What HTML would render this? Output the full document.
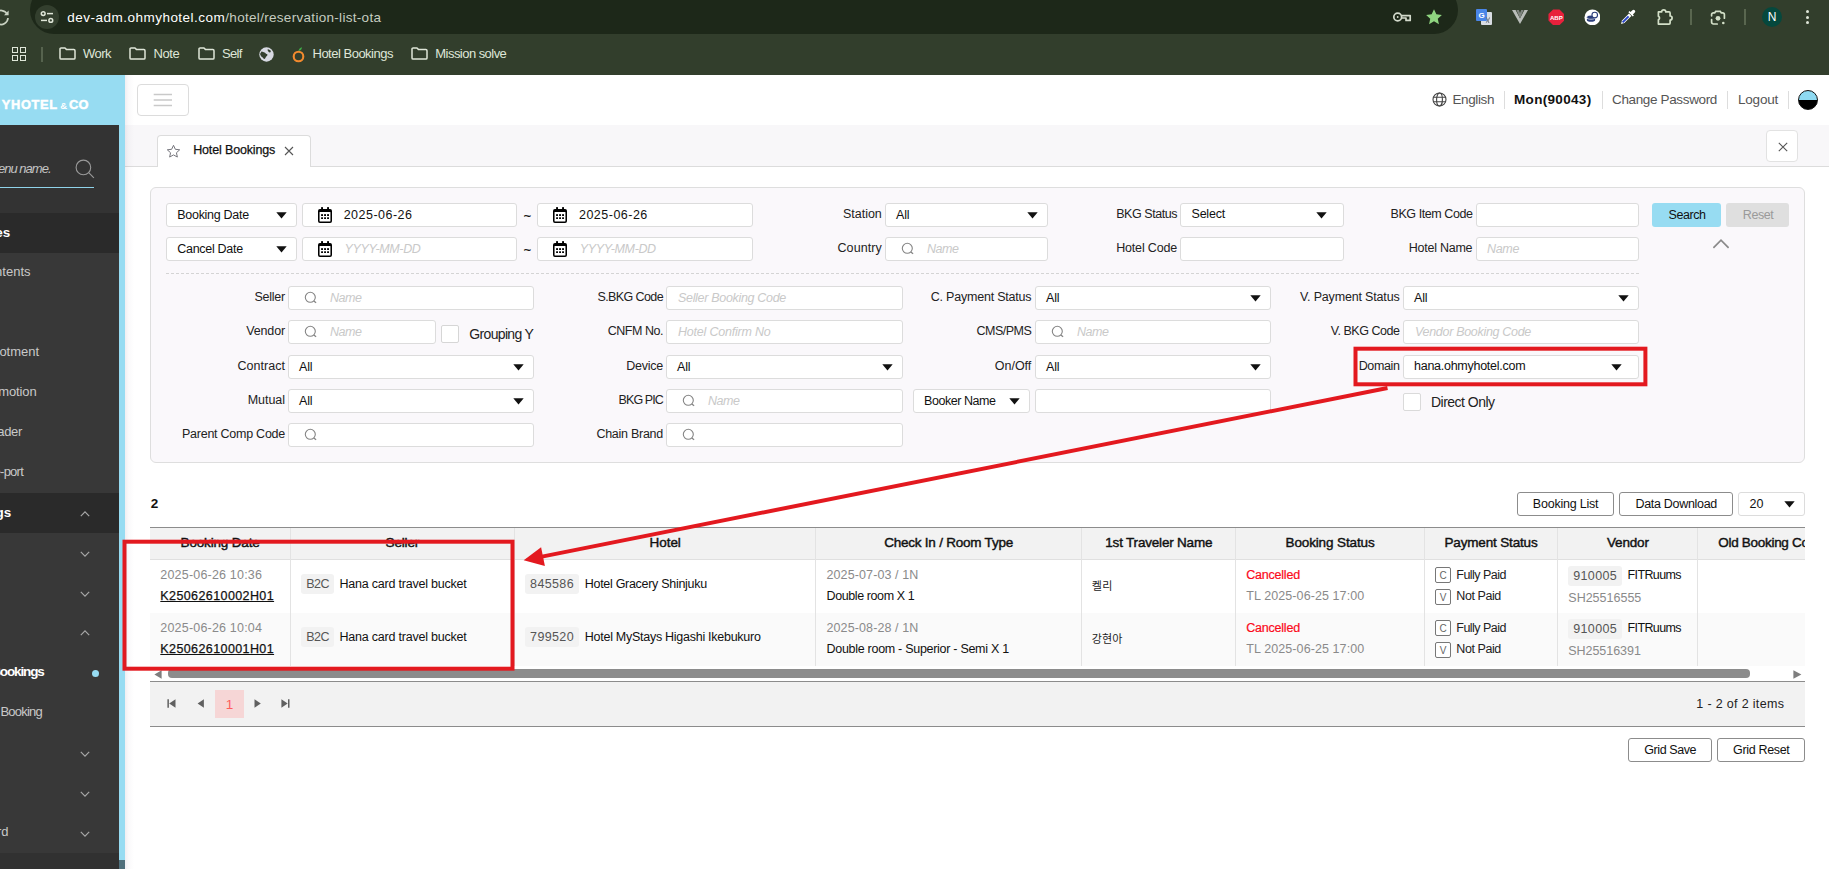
<!DOCTYPE html>
<html lang="en"><head><meta charset="utf-8"><title>Hotel Bookings</title>
<style>

html,body{margin:0;padding:0;}
body{width:1829px;height:869px;overflow:hidden;background:#fff;font-family:"Liberation Sans","Noto Sans CJK KR",sans-serif;}
#root{position:relative;width:1829px;height:869px;overflow:hidden;background:#fff;}
#root div,#root span,#root svg{position:absolute;box-sizing:border-box;white-space:pre;}
.inp{background:#fff;border:1px solid #dcdcdc;border-radius:3px;}
.btn{background:#fff;border:1px solid #8c8c8c;border-radius:3px;}

</style></head>
<body>
<div id="root">
<div style="left:0px;top:0px;width:1829px;height:75px;background:#323e2c;"></div>
<div style="left:30px;top:-14px;width:1428px;height:48px;background:#1d2819;border-radius:24px;"></div>
<svg style="left:-9px;top:8px" width="20" height="20" viewBox="0 0 20 20"><path d="M16.2 6.2A7 7 0 1 0 17 10" fill="none" stroke="#c9d2c2" stroke-width="1.7"/><path d="M17.6 2.6v4.6H13z" fill="#c9d2c2"/></svg>
<div style="left:35px;top:5px;width:24px;height:24px;background:#333f2e;border-radius:12px;"></div>
<svg style="left:39px;top:9px" width="16" height="16" viewBox="0 0 16 16" fill="none" stroke="#dfe6d8" stroke-width="1.5"><circle cx="4.2" cy="4.6" r="1.9"/><path d="M8 4.6h6"/><circle cx="11.8" cy="11.4" r="1.9"/><path d="M2 11.4h6"/></svg>
<span style="left:67.30px;top:11.00px;line-height:13.5px;font-size:13.5px;font-weight:400;color:#ffffff;letter-spacing:0.484px;">dev-adm.ohmyhotel.com</span>
<span style="left:225.30px;top:11.00px;line-height:13.5px;font-size:13.5px;font-weight:400;color:#c6cdc0;letter-spacing:0.303px;">/hotel/reservation-list-ota</span>
<svg style="left:1392px;top:7.800px" width="20" height="18" viewBox="0 0 20 18" fill="none" stroke="#d3dacc" stroke-width="1.700" stroke-linejoin="round"><circle cx="5.700" cy="9" r="3.900"/><circle cx="5.700" cy="9" r=".900" fill="#d3dacc" stroke="none"/><path d="M9.600 7.600h8.600v4.800h-4.200v-2.400h-4"/></svg>
<svg style="left:1425px;top:8px" width="18" height="18" viewBox="0 0 18 18"><path d="M9 1.2l2.35 5.1 5.55.6-4.15 3.75 1.2 5.5L9 13.3l-4.95 2.85 1.2-5.5L1.1 6.9l5.55-.6z" fill="#8fd580"/></svg>
<svg style="left:1475px;top:8px" width="18" height="18" viewBox="0 0 18 18"><rect x="6" y="4" width="11" height="13" rx="1" fill="#d9dde3"/><rect x="1" y="1" width="11" height="12" rx="1" fill="#4a86e8"/><text x="3.6" y="10" font-size="8" font-weight="700" fill="#fff" font-family="Liberation Sans,sans-serif">G</text><path d="M11 9l3 6M14.5 9.5c-.6 2.5-2 4-3.6 5" stroke="#6c7480" stroke-width="1" fill="none"/></svg>
<svg style="left:1511px;top:9px" width="18" height="16" viewBox="0 0 18 16"><path d="M1 1h3.6L9 9.5 13.4 1H17L9 15z" fill="#b9bdb9"/><path d="M5.4 1h2.4L9 4l1.2-3h2.4L9 9.5z" fill="#7f857f"/></svg>
<svg style="left:1547.700px;top:8.600px" width="16.600" height="16.600" viewBox="0 0 18 18"><path d="M5.5 .5h7l5 5v7l-5 5h-7l-5-5v-7z" fill="#e8213c"/><text x="9" y="11.6" text-anchor="middle" font-size="6.6" font-weight="700" fill="#fff" font-family="Liberation Sans,sans-serif">ABP</text></svg>
<svg style="left:1583.600px;top:8.600px" width="16.800" height="16.800" viewBox="0 0 18 18"><circle cx="9" cy="9" r="8.500" fill="#fff"/><ellipse cx="7.5" cy="11.5" rx="4.5" ry="2.2" fill="#2c3f7c"/><ellipse cx="7.5" cy="8.8" rx="4.5" ry="2.2" fill="#2c3f7c" stroke="#fff" stroke-width=".7"/><circle cx="11.5" cy="6.5" r="3" fill="#fff" stroke="#2c3f7c" stroke-width="1.2"/></svg>
<svg style="left:1619px;top:8px" width="18" height="18" viewBox="0 0 18 18"><path d="M2 16l1-3.4 7-7 2.4 2.4-7 7z" fill="#fff"/><path d="M3.6 14.4l6-6" stroke="#2a46c8" stroke-width="2"/><path d="M9.4 4.2l4.4 4.4 1.1-1.1-1-1 1.9-1.9a1.7 1.7 0 0 0-2.4-2.4l-1.9 1.9-1-1z" fill="#fff"/></svg>
<svg style="left:1655px;top:7px" width="20" height="20" viewBox="0 0 20 20" fill="none" stroke="#d3e0c8" stroke-width="1.700" stroke-linejoin="round"><path d="M3.400 4.900h3.200a2.100 2.100 0 0 1 4.200 0h3.300a1 1 0 0 1 1 1v3.100a2 2 0 0 1 0 4v3.100a1 1 0 0 1-1 1H3.400v-4.300a2 2 0 0 0 0-3.600z"/></svg>
<div style="left:1690px;top:9px;width:1.5px;height:16px;background:#59664f;"></div>
<svg style="left:1709px;top:8.500px" width="18" height="18" viewBox="0 0 18 18" fill="none" stroke="#d3e0c8" stroke-width="1.700" stroke-linecap="round"><path d="M2.600 6.800V5.600A1.800 1.800 0 0 1 4.400 3.800h1.300l1.100-1.500h4.400l1.100 1.500h1.300a1.800 1.800 0 0 1 1.800 1.800v3.600M2.600 10.600v2.600A1.800 1.800 0 0 0 4.400 15h3.800"/><circle cx="9" cy="9.300" r="2.400" fill="#d3e0c8" stroke="none"/><circle cx="14.300" cy="14" r="1.300" fill="#d3e0c8" stroke="none"/></svg>
<div style="left:1744px;top:9px;width:1.5px;height:16px;background:#59664f;"></div>
<div style="left:1762px;top:7px;width:20px;height:20px;background:#05483d;border-radius:10px;"></div>
<span style="left:1767.66px;top:11.00px;line-height:12px;font-size:12px;font-weight:400;color:#fff;">N</span>
<div style="left:1806.3px;top:10px;width:3.2px;height:3.2px;background:#dfe6d8;border-radius:2px;"></div>
<div style="left:1806.3px;top:15.5px;width:3.2px;height:3.2px;background:#dfe6d8;border-radius:2px;"></div>
<div style="left:1806.3px;top:21px;width:3.2px;height:3.2px;background:#dfe6d8;border-radius:2px;"></div>
<div style="left:12px;top:47.2px;width:6px;height:6px;border:1.600px solid #dfe6d8;"></div>
<div style="left:20px;top:47.2px;width:6px;height:6px;border:1.600px solid #dfe6d8;"></div>
<div style="left:12px;top:55.2px;width:6px;height:6px;border:1.600px solid #dfe6d8;"></div>
<div style="left:20px;top:55.2px;width:6px;height:6px;border:1.600px solid #dfe6d8;"></div>
<div style="left:41.3px;top:46.5px;width:1.3px;height:15px;background:#56634e;"></div>
<svg style="left:58.5px;top:47.400px" width="17" height="13" viewBox="0 0 17 13" fill="none" stroke="#dfe6d8" stroke-width="1.500" stroke-linejoin="round"><path d="M1 2.100A1.100 1.100 0 0 1 2.100 1H6l1.600 1.600h7.300A1.100 1.100 0 0 1 16 3.700v7.200A1.100 1.100 0 0 1 14.900 12H2.100A1.100 1.100 0 0 1 1 10.900z"/></svg>
<span style="left:83.00px;top:47.00px;line-height:13px;font-size:13px;font-weight:400;color:#dfe6d8;letter-spacing:-0.527px;">Work</span>
<svg style="left:128.5px;top:47.400px" width="17" height="13" viewBox="0 0 17 13" fill="none" stroke="#dfe6d8" stroke-width="1.500" stroke-linejoin="round"><path d="M1 2.100A1.100 1.100 0 0 1 2.100 1H6l1.600 1.600h7.300A1.100 1.100 0 0 1 16 3.700v7.200A1.100 1.100 0 0 1 14.900 12H2.100A1.100 1.100 0 0 1 1 10.900z"/></svg>
<span style="left:153.50px;top:47.00px;line-height:13px;font-size:13px;font-weight:400;color:#dfe6d8;letter-spacing:-0.442px;">Note</span>
<svg style="left:197.5px;top:47.400px" width="17" height="13" viewBox="0 0 17 13" fill="none" stroke="#dfe6d8" stroke-width="1.500" stroke-linejoin="round"><path d="M1 2.100A1.100 1.100 0 0 1 2.100 1H6l1.600 1.600h7.300A1.100 1.100 0 0 1 16 3.700v7.200A1.100 1.100 0 0 1 14.900 12H2.100A1.100 1.100 0 0 1 1 10.900z"/></svg>
<span style="left:222.00px;top:47.00px;line-height:13px;font-size:13px;font-weight:400;color:#dfe6d8;letter-spacing:-0.702px;">Self</span>
<svg style="left:258.5px;top:46.5px" width="15" height="15" viewBox="0 0 15 15"><circle cx="7.5" cy="7.5" r="7.2" fill="#d7d9e2"/><path d="M2.500 4.500c1.500 0 2 1 3 1s1 1.500 2.200 1.500.800 1.800-.200 2.300S6.500 12 5.500 12 4 10.500 3 10 1.500 8 1 7zM9 2c.500 1 1.800.800 2.500 1.500s.200 2-.700 2S9.500 4.500 9 4 8.500 2.500 9 2z" fill="#333f2e"/></svg>
<svg style="left:290.5px;top:45.5px" width="16" height="18" viewBox="0 0 16 18"><circle cx="7.500" cy="10.500" r="4.800" fill="none" stroke="#f28a2e" stroke-width="2.100"/><path d="M7.600 4.900c.300-2 1.500-3.200 3.400-3.700-.100 2-1.300 3.300-3.400 3.700z" fill="#3fae49"/></svg>
<span style="left:312.50px;top:47.00px;line-height:13px;font-size:13px;font-weight:400;color:#dfe6d8;letter-spacing:-0.497px;">Hotel Bookings</span>
<svg style="left:411px;top:47.400px" width="17" height="13" viewBox="0 0 17 13" fill="none" stroke="#dfe6d8" stroke-width="1.500" stroke-linejoin="round"><path d="M1 2.100A1.100 1.100 0 0 1 2.100 1H6l1.600 1.600h7.300A1.100 1.100 0 0 1 16 3.700v7.200A1.100 1.100 0 0 1 14.900 12H2.100A1.100 1.100 0 0 1 1 10.900z"/></svg>
<span style="left:435.30px;top:47.00px;line-height:13px;font-size:13px;font-weight:400;color:#dfe6d8;letter-spacing:-0.541px;">Mission solve</span>
<div style="left:0px;top:75px;width:1829px;height:50px;background:#fff;"></div>
<div style="left:0px;top:75px;width:125px;height:50px;background:#97dcf2;"></div>
<span style="left:1.80px;top:99.00px;line-height:12.8px;font-size:12.8px;font-weight:700;color:#fff;letter-spacing:0.682px;-webkit-text-stroke:.500px #fff;">YHOTEL</span>
<span style="left:-32.80px;top:99.00px;line-height:12.8px;font-size:12.8px;font-weight:700;color:#fff;letter-spacing:1.380px;-webkit-text-stroke:.500px #fff;">OHM</span>
<span style="left:60.20px;top:101.00px;line-height:9.5px;font-size:9.5px;font-weight:700;color:#fff;letter-spacing:-0.075px;">&amp;</span>
<span style="left:69.00px;top:99.00px;line-height:12.8px;font-size:12.8px;font-weight:700;color:#fff;letter-spacing:0.148px;-webkit-text-stroke:.500px #fff;">CO</span>
<div style="left:137px;top:84px;width:52px;height:32px;border:1px solid #dcdcdc;border-radius:4px;background:#fff;"></div>
<svg style="left:153px;top:90px" width="20" height="20" viewBox="0 0 20 20"><path d="M.700 4.500h18.300M.700 10h18.300M.700 15.500h18.300" stroke="#c9c9c9" stroke-width="1.700"/></svg>
<svg style="left:1432px;top:91.800px" width="15" height="15" viewBox="0 0 15 15" fill="none" stroke="#444" stroke-width="1.100"><circle cx="7.500" cy="7.500" r="6.500"/><ellipse cx="7.500" cy="7.500" rx="2.900" ry="6.500"/><path d="M1.300 5.300h12.400M1.300 9.700h12.400"/></svg>
<span style="left:1452.50px;top:93.00px;line-height:13.5px;font-size:13.5px;font-weight:400;color:#555;letter-spacing:-0.397px;">English</span>
<div style="left:1504px;top:91px;width:1px;height:18px;background:#ddd;"></div>
<span style="left:1514.00px;top:93.00px;line-height:13.5px;font-size:13.5px;font-weight:700;color:#111;letter-spacing:0.322px;">Mon(90043)</span>
<div style="left:1602px;top:91px;width:1px;height:18px;background:#ddd;"></div>
<span style="left:1612.00px;top:93.00px;line-height:13.5px;font-size:13.5px;font-weight:400;color:#555;letter-spacing:-0.355px;">Change Password</span>
<div style="left:1727px;top:91px;width:1px;height:18px;background:#ddd;"></div>
<span style="left:1738.00px;top:93.00px;line-height:13.5px;font-size:13.5px;font-weight:400;color:#555;letter-spacing:-0.216px;">Logout</span>
<div style="left:1788px;top:91px;width:1px;height:18px;background:#ddd;"></div>
<div style="left:1798px;top:90px;width:20px;height:20px;border-radius:10px;border:1px solid #111;background:linear-gradient(#8edaf2 0 50%,#000 50% 100%);"></div>
<div style="left:0px;top:125px;width:125px;height:744px;background:#97dcf2;"></div>
<div style="left:0px;top:125px;width:119px;height:744px;background:#383838;"></div>
<div style="left:0px;top:125px;width:119px;height:88px;background:#333;"></div>
<div style="left:0px;top:213px;width:119px;height:40px;background:#2a2a2a;"></div>
<div style="left:0px;top:493px;width:119px;height:40px;background:#2a2a2a;"></div>
<div style="left:0px;top:853px;width:119px;height:16px;background:#313131;"></div>
<div style="left:119px;top:860px;width:6px;height:9px;background:#50707c;"></div>
<span style="left:-40.50px;top:162.00px;line-height:13px;font-size:13px;font-weight:400;font-style:italic;color:#c4c4c4;letter-spacing:-0.997px;">Enter menu name.</span>
<svg style="left:74px;top:158px" width="22" height="22" viewBox="0 0 22 22" fill="none" stroke="#9a9a9a" stroke-width="1.100"><circle cx="9.400" cy="9.400" r="7.300"/><path d="M14.700 14.700l5.200 5.200"/></svg>
<div style="left:0px;top:187px;width:94px;height:1.2px;background:#8fd3ea;"></div>
<span style="left:-26.00px;top:226.00px;line-height:13.5px;font-size:13.5px;font-weight:700;color:#fff;letter-spacing:-0.156px;">Rates</span>
<span style="left:-21.50px;top:265.00px;line-height:13px;font-size:13px;font-weight:400;color:#c8c8c8;letter-spacing:-0.006px;">Contents</span>
<span style="left:-15.00px;top:345.00px;line-height:13px;font-size:13px;font-weight:400;color:#c8c8c8;letter-spacing:-0.023px;">Allotment</span>
<span style="left:-21.50px;top:385.00px;line-height:13px;font-size:13px;font-weight:400;color:#c8c8c8;letter-spacing:-0.139px;">Promotion</span>
<span style="left:-28.00px;top:425.00px;line-height:13px;font-size:13px;font-weight:400;color:#c8c8c8;letter-spacing:-0.346px;">Uploader</span>
<span style="left:-15.00px;top:465.00px;line-height:13px;font-size:13px;font-weight:400;color:#c8c8c8;letter-spacing:-0.766px;">Re-port</span>
<span style="left:-49.00px;top:506.00px;line-height:13.5px;font-size:13.5px;font-weight:700;color:#fff;letter-spacing:-0.189px;">Bookings</span>
<span style="left:-8.80px;top:665.00px;line-height:13.5px;font-size:13.5px;font-weight:700;color:#fff;letter-spacing:-1.127px;">Bookings</span>
<span style="left:0.40px;top:705.00px;line-height:13px;font-size:13px;font-weight:400;color:#c8c8c8;letter-spacing:-0.769px;">Booking</span>
<span style="left:-25.60px;top:825.00px;line-height:13px;font-size:13px;font-weight:400;color:#c8c8c8;letter-spacing:-0.141px;">Board</span>
<svg style="left:77px;top:505.6px" width="16" height="16" viewBox="-8 -8 16 16" fill="none" stroke="#a8a8a8" stroke-width="1.2"><path d="M-4.2 2.1L0 -2.1L4.2 2.1"/></svg>
<svg style="left:77px;top:545.6px" width="16" height="16" viewBox="-8 -8 16 16" fill="none" stroke="#a8a8a8" stroke-width="1.2"><path d="M-4.2 -2.1L0 2.1L4.2 -2.1"/></svg>
<svg style="left:77px;top:585.6px" width="16" height="16" viewBox="-8 -8 16 16" fill="none" stroke="#a8a8a8" stroke-width="1.2"><path d="M-4.2 -2.1L0 2.1L4.2 -2.1"/></svg>
<svg style="left:77px;top:625.4px" width="16" height="16" viewBox="-8 -8 16 16" fill="none" stroke="#a8a8a8" stroke-width="1.2"><path d="M-4.2 2.1L0 -2.1L4.2 2.1"/></svg>
<svg style="left:77px;top:745.5px" width="16" height="16" viewBox="-8 -8 16 16" fill="none" stroke="#a8a8a8" stroke-width="1.2"><path d="M-4.2 -2.1L0 2.1L4.2 -2.1"/></svg>
<svg style="left:77px;top:785.5px" width="16" height="16" viewBox="-8 -8 16 16" fill="none" stroke="#a8a8a8" stroke-width="1.2"><path d="M-4.2 -2.1L0 2.1L4.2 -2.1"/></svg>
<svg style="left:77px;top:825.7px" width="16" height="16" viewBox="-8 -8 16 16" fill="none" stroke="#a8a8a8" stroke-width="1.2"><path d="M-4.2 -2.1L0 2.1L4.2 -2.1"/></svg>
<div style="left:92px;top:670px;width:7px;height:7px;background:#97dcf2;border-radius:4px;"></div>
<div style="left:125px;top:125px;width:1704px;height:41px;background:#f8f7f9;"></div>
<div style="left:125px;top:166px;width:1704px;height:1px;background:#dcdcdc;"></div>
<div style="left:157px;top:135px;width:154px;height:32px;background:#fff;border:1px solid #dcdcdc;border-bottom:none;border-radius:4px 4px 0 0;"></div>
<svg style="left:166px;top:143.600px" width="15" height="15" viewBox="0 0 15 15"><path d="M7.500 1.300l1.850 4 4.350.500-3.250 2.950.900 4.300L7.500 10.900l-3.850 2.150.900-4.300L1.300 5.800l4.350-.500z" fill="none" stroke="#75757c" stroke-width="1" stroke-linejoin="round"/></svg>
<span style="left:193.20px;top:144.00px;line-height:12.5px;font-size:12.5px;font-weight:500;color:#111;letter-spacing:-0.148px;-webkit-text-stroke:.25px #111;">Hotel Bookings</span>
<svg style="left:284px;top:146px" width="10" height="10" viewBox="0 0 10 10"><path d="M1 1l8 8M9 1l-8 8" stroke="#555" stroke-width="1.100"/></svg>
<div style="left:1766px;top:130px;width:32px;height:32px;background:#fff;border:1px solid #e2e2e2;border-radius:4px;"></div>
<svg style="left:1777.500px;top:141.500px" width="10" height="10" viewBox="0 0 10 10"><path d="M.800 .800l8.400 8.400M9.200 .800l-8.400 8.400" stroke="#555" stroke-width="1.100"/></svg>
<div style="left:150px;top:187px;width:1655px;height:276px;background:#faf8fb;border:1px solid #dedede;border-radius:6px;"></div>
<div style="left:166px;top:273px;width:1473px;height:1px;background:repeating-linear-gradient(90deg,#d4d4d4 0 3px,transparent 3px 5px);"></div>
<div class="inp" style="left:166px;top:203px;width:131px;height:24px;"></div>
<span style="left:177.30px;top:209.00px;line-height:12.5px;font-size:12.5px;font-weight:400;color:#111;letter-spacing:-0.297px;">Booking Date</span>
<svg style="left:275.5px;top:212px" width="11" height="7" viewBox="0 0 11 7"><path d="M.300 .300h10.400L5.500 6.500z" fill="#111"/></svg>
<div class="inp" style="left:302px;top:203px;width:215px;height:24px;"></div>
<svg style="left:318px;top:207px" width="14" height="16" viewBox="0 0 14 16"><g fill="#000"><rect x="3.100" y="0" width="1.900" height="3" rx=".600"/><rect x="9.100" y="0" width="1.900" height="3" rx=".600"/><rect x="0" y="2.100" width="14" height="13.900" rx="1.900"/></g><rect x="1.550" y="5" width="10.900" height="9.400" rx=".300" fill="#fff"/><g fill="#000"><rect x="3.1" y="7.1" width="1.900" height="1.950" rx=".400"/><rect x="6.1" y="7.1" width="1.900" height="1.950" rx=".400"/><rect x="9.1" y="7.1" width="1.900" height="1.950" rx=".400"/><rect x="3.1" y="10.15" width="1.900" height="1.950" rx=".400"/><rect x="6.1" y="10.15" width="1.900" height="1.950" rx=".400"/><rect x="9.1" y="10.15" width="1.900" height="1.950" rx=".400"/></g></svg>
<span style="left:343.70px;top:209.00px;line-height:12.5px;font-size:12.5px;font-weight:400;color:#111;letter-spacing:0.485px;">2025-06-26</span>
<span style="left:523.84px;top:210.00px;line-height:12.5px;font-size:12.5px;font-weight:400;color:#111;-webkit-text-stroke:.300px #111;">~</span>
<div class="inp" style="left:537px;top:203px;width:216px;height:24px;"></div>
<svg style="left:553px;top:207px" width="14" height="16" viewBox="0 0 14 16"><g fill="#000"><rect x="3.100" y="0" width="1.900" height="3" rx=".600"/><rect x="9.100" y="0" width="1.900" height="3" rx=".600"/><rect x="0" y="2.100" width="14" height="13.900" rx="1.900"/></g><rect x="1.550" y="5" width="10.900" height="9.400" rx=".300" fill="#fff"/><g fill="#000"><rect x="3.1" y="7.1" width="1.900" height="1.950" rx=".400"/><rect x="6.1" y="7.1" width="1.900" height="1.950" rx=".400"/><rect x="9.1" y="7.1" width="1.900" height="1.950" rx=".400"/><rect x="3.1" y="10.15" width="1.900" height="1.950" rx=".400"/><rect x="6.1" y="10.15" width="1.900" height="1.950" rx=".400"/><rect x="9.1" y="10.15" width="1.900" height="1.950" rx=".400"/></g></svg>
<span style="left:579.00px;top:209.00px;line-height:12.5px;font-size:12.5px;font-weight:400;color:#111;letter-spacing:0.485px;">2025-06-26</span>
<span style="left:843.00px;top:208.00px;line-height:12.5px;font-size:12.5px;font-weight:400;color:#222;letter-spacing:-0.017px;">Station</span>
<div class="inp" style="left:885px;top:203px;width:163px;height:24px;"></div>
<span style="left:896.00px;top:209.00px;line-height:12.5px;font-size:12.5px;font-weight:400;color:#111;letter-spacing:-0.135px;">All</span>
<svg style="left:1026.5px;top:212px" width="11" height="7" viewBox="0 0 11 7"><path d="M.300 .300h10.400L5.500 6.500z" fill="#111"/></svg>
<span style="left:1116.20px;top:208.00px;line-height:12.5px;font-size:12.5px;font-weight:400;color:#222;letter-spacing:-0.451px;">BKG Status</span>
<div class="inp" style="left:1180px;top:203px;width:164px;height:24px;"></div>
<span style="left:1191.50px;top:208.00px;line-height:12.5px;font-size:12.5px;font-weight:400;color:#111;letter-spacing:-0.208px;">Select</span>
<svg style="left:1316.0px;top:212px" width="11" height="7" viewBox="0 0 11 7"><path d="M.300 .300h10.400L5.500 6.500z" fill="#111"/></svg>
<span style="left:1390.50px;top:208.00px;line-height:12.5px;font-size:12.5px;font-weight:400;color:#222;letter-spacing:-0.427px;">BKG Item Code</span>
<div class="inp" style="left:1476px;top:203px;width:163px;height:24px;"></div>
<div style="left:1652px;top:203px;width:69px;height:24px;background:#97dcf2;border-radius:3px;"></div>
<span style="left:1668.50px;top:209.00px;line-height:12.5px;font-size:12.5px;font-weight:400;color:#111;letter-spacing:-0.435px;">Search</span>
<div style="left:1726px;top:203px;width:63px;height:24px;background:#dfdfdf;border-radius:3px;"></div>
<span style="left:1742.80px;top:209.00px;line-height:12.5px;font-size:12.5px;font-weight:400;color:#9a9a9a;letter-spacing:-0.431px;">Reset</span>
<div class="inp" style="left:166px;top:237px;width:131px;height:24px;"></div>
<span style="left:177.30px;top:243.00px;line-height:12.5px;font-size:12.5px;font-weight:400;color:#111;letter-spacing:-0.300px;">Cancel Date</span>
<svg style="left:275.5px;top:246px" width="11" height="7" viewBox="0 0 11 7"><path d="M.300 .300h10.400L5.500 6.500z" fill="#111"/></svg>
<div class="inp" style="left:302px;top:237px;width:215px;height:24px;"></div>
<svg style="left:318px;top:241px" width="14" height="16" viewBox="0 0 14 16"><g fill="#000"><rect x="3.100" y="0" width="1.900" height="3" rx=".600"/><rect x="9.100" y="0" width="1.900" height="3" rx=".600"/><rect x="0" y="2.100" width="14" height="13.900" rx="1.900"/></g><rect x="1.550" y="5" width="10.900" height="9.400" rx=".300" fill="#fff"/><g fill="#000"><rect x="3.1" y="7.1" width="1.900" height="1.950" rx=".400"/><rect x="6.1" y="7.1" width="1.900" height="1.950" rx=".400"/><rect x="9.1" y="7.1" width="1.900" height="1.950" rx=".400"/><rect x="3.1" y="10.15" width="1.900" height="1.950" rx=".400"/><rect x="6.1" y="10.15" width="1.900" height="1.950" rx=".400"/><rect x="9.1" y="10.15" width="1.900" height="1.950" rx=".400"/></g></svg>
<span style="left:344.50px;top:243.00px;line-height:12.5px;font-size:12.5px;font-weight:400;font-style:italic;color:#c9c9c9;letter-spacing:-0.364px;">YYYY-MM-DD</span>
<span style="left:523.84px;top:244.00px;line-height:12.5px;font-size:12.5px;font-weight:400;color:#111;-webkit-text-stroke:.300px #111;">~</span>
<div class="inp" style="left:537px;top:237px;width:216px;height:24px;"></div>
<svg style="left:553px;top:241px" width="14" height="16" viewBox="0 0 14 16"><g fill="#000"><rect x="3.100" y="0" width="1.900" height="3" rx=".600"/><rect x="9.100" y="0" width="1.900" height="3" rx=".600"/><rect x="0" y="2.100" width="14" height="13.900" rx="1.900"/></g><rect x="1.550" y="5" width="10.900" height="9.400" rx=".300" fill="#fff"/><g fill="#000"><rect x="3.1" y="7.1" width="1.900" height="1.950" rx=".400"/><rect x="6.1" y="7.1" width="1.900" height="1.950" rx=".400"/><rect x="9.1" y="7.1" width="1.900" height="1.950" rx=".400"/><rect x="3.1" y="10.15" width="1.900" height="1.950" rx=".400"/><rect x="6.1" y="10.15" width="1.900" height="1.950" rx=".400"/><rect x="9.1" y="10.15" width="1.900" height="1.950" rx=".400"/></g></svg>
<span style="left:579.80px;top:243.00px;line-height:12.5px;font-size:12.5px;font-weight:400;font-style:italic;color:#c9c9c9;letter-spacing:-0.364px;">YYYY-MM-DD</span>
<span style="left:837.50px;top:242.00px;line-height:12.5px;font-size:12.5px;font-weight:400;color:#222;letter-spacing:0.074px;">Country</span>
<div class="inp" style="left:885px;top:237px;width:163px;height:24px;"></div>
<svg style="left:901.3px;top:242.1px" width="14" height="14" viewBox="0 0 14 14" fill="none" stroke="#848484" stroke-width="1.100"><circle cx="6.300" cy="6.300" r="5"/><path d="M9.800 9.900l2.300 1.900" stroke-width="1.300"/></svg>
<span style="left:927.00px;top:243.00px;line-height:12.5px;font-size:12.5px;font-weight:400;font-style:italic;color:#c9c9c9;letter-spacing:-0.461px;">Name</span>
<span style="left:1116.20px;top:242.00px;line-height:12.5px;font-size:12.5px;font-weight:400;color:#222;letter-spacing:-0.175px;">Hotel Code</span>
<div class="inp" style="left:1180px;top:237px;width:164px;height:24px;"></div>
<span style="left:1408.80px;top:242.00px;line-height:12.5px;font-size:12.5px;font-weight:400;color:#222;letter-spacing:-0.250px;">Hotel Name</span>
<div class="inp" style="left:1476px;top:237px;width:163px;height:24px;"></div>
<span style="left:1487.00px;top:243.00px;line-height:12.5px;font-size:12.5px;font-weight:400;font-style:italic;color:#c9c9c9;letter-spacing:-0.336px;">Name</span>
<svg style="left:1713.4px;top:235.6px" width="16" height="16" viewBox="-8 -8 16 16" fill="none" stroke="#8a8a8a" stroke-width="1.7"><path d="M-7.6 3.8L0 -3.8L7.6 3.8"/></svg>
<span style="left:254.50px;top:291.00px;line-height:12.5px;font-size:12.5px;font-weight:400;color:#222;letter-spacing:-0.245px;">Seller</span>
<div class="inp" style="left:288px;top:286px;width:246px;height:24px;"></div>
<svg style="left:304.3px;top:291.1px" width="14" height="14" viewBox="0 0 14 14" fill="none" stroke="#848484" stroke-width="1.100"><circle cx="6.300" cy="6.300" r="5"/><path d="M9.800 9.900l2.300 1.900" stroke-width="1.300"/></svg>
<span style="left:330.00px;top:292.00px;line-height:12.5px;font-size:12.5px;font-weight:400;font-style:italic;color:#c9c9c9;letter-spacing:-0.461px;">Name</span>
<span style="left:597.50px;top:291.00px;line-height:12.5px;font-size:12.5px;font-weight:400;color:#222;letter-spacing:-0.608px;">S.BKG Code</span>
<div class="inp" style="left:666px;top:286px;width:237px;height:24px;"></div>
<span style="left:678.00px;top:292.00px;line-height:12.5px;font-size:12.5px;font-weight:400;font-style:italic;color:#c9c9c9;letter-spacing:-0.314px;">Seller Booking Code</span>
<span style="left:930.80px;top:291.00px;line-height:12.5px;font-size:12.5px;font-weight:400;color:#222;letter-spacing:-0.219px;">C. Payment Status</span>
<div class="inp" style="left:1035px;top:286px;width:236px;height:24px;"></div>
<span style="left:1046.00px;top:292.00px;line-height:12.5px;font-size:12.5px;font-weight:400;color:#111;letter-spacing:-0.135px;">All</span>
<svg style="left:1249.5px;top:295px" width="11" height="7" viewBox="0 0 11 7"><path d="M.300 .300h10.400L5.500 6.500z" fill="#111"/></svg>
<span style="left:1300.00px;top:291.00px;line-height:12.5px;font-size:12.5px;font-weight:400;color:#222;letter-spacing:-0.169px;">V. Payment Status</span>
<div class="inp" style="left:1403px;top:286px;width:236px;height:24px;"></div>
<span style="left:1414.00px;top:292.00px;line-height:12.5px;font-size:12.5px;font-weight:400;color:#111;letter-spacing:-0.135px;">All</span>
<svg style="left:1617.5px;top:295px" width="11" height="7" viewBox="0 0 11 7"><path d="M.300 .300h10.400L5.500 6.500z" fill="#111"/></svg>
<span style="left:246.20px;top:325.00px;line-height:12.5px;font-size:12.5px;font-weight:400;color:#222;letter-spacing:-0.138px;">Vendor</span>
<div class="inp" style="left:288px;top:320px;width:148px;height:24px;"></div>
<svg style="left:304.3px;top:325.1px" width="14" height="14" viewBox="0 0 14 14" fill="none" stroke="#848484" stroke-width="1.100"><circle cx="6.300" cy="6.300" r="5"/><path d="M9.800 9.900l2.300 1.900" stroke-width="1.300"/></svg>
<span style="left:330.00px;top:326.00px;line-height:12.5px;font-size:12.5px;font-weight:400;font-style:italic;color:#c9c9c9;letter-spacing:-0.461px;">Name</span>
<div style="left:441px;top:325px;width:18px;height:18px;background:#fff;border:1px solid #d6d6d6;border-radius:2px;"></div>
<span style="left:469.30px;top:327.00px;line-height:14px;font-size:14px;font-weight:400;color:#222;letter-spacing:-0.658px;">Grouping Y</span>
<span style="left:607.70px;top:325.00px;line-height:12.5px;font-size:12.5px;font-weight:400;color:#222;letter-spacing:-0.466px;">CNFM No.</span>
<div class="inp" style="left:666px;top:320px;width:237px;height:24px;"></div>
<span style="left:678.00px;top:326.00px;line-height:12.5px;font-size:12.5px;font-weight:400;font-style:italic;color:#c9c9c9;letter-spacing:-0.211px;">Hotel Confirm No</span>
<span style="left:976.50px;top:325.00px;line-height:12.5px;font-size:12.5px;font-weight:400;color:#222;letter-spacing:-0.506px;">CMS/PMS</span>
<div class="inp" style="left:1035px;top:320px;width:236px;height:24px;"></div>
<svg style="left:1051.3px;top:325.1px" width="14" height="14" viewBox="0 0 14 14" fill="none" stroke="#848484" stroke-width="1.100"><circle cx="6.300" cy="6.300" r="5"/><path d="M9.800 9.900l2.300 1.900" stroke-width="1.300"/></svg>
<span style="left:1077.00px;top:326.00px;line-height:12.5px;font-size:12.5px;font-weight:400;font-style:italic;color:#c9c9c9;letter-spacing:-0.461px;">Name</span>
<span style="left:1330.70px;top:325.00px;line-height:12.5px;font-size:12.5px;font-weight:400;color:#222;letter-spacing:-0.463px;">V. BKG Code</span>
<div class="inp" style="left:1403px;top:320px;width:236px;height:24px;"></div>
<span style="left:1415.00px;top:326.00px;line-height:12.5px;font-size:12.5px;font-weight:400;font-style:italic;color:#c9c9c9;letter-spacing:-0.308px;">Vendor Booking Code</span>
<span style="left:237.50px;top:360.00px;line-height:12.5px;font-size:12.5px;font-weight:400;color:#222;letter-spacing:0.031px;">Contract</span>
<div class="inp" style="left:288px;top:355px;width:246px;height:24px;"></div>
<span style="left:299.00px;top:361.00px;line-height:12.5px;font-size:12.5px;font-weight:400;color:#111;letter-spacing:-0.135px;">All</span>
<svg style="left:512.5px;top:364px" width="11" height="7" viewBox="0 0 11 7"><path d="M.300 .300h10.400L5.500 6.500z" fill="#111"/></svg>
<span style="left:626.20px;top:360.00px;line-height:12.5px;font-size:12.5px;font-weight:400;color:#222;letter-spacing:-0.236px;">Device</span>
<div class="inp" style="left:666px;top:355px;width:237px;height:24px;"></div>
<span style="left:677.00px;top:361.00px;line-height:12.5px;font-size:12.5px;font-weight:400;color:#111;letter-spacing:-0.135px;">All</span>
<svg style="left:881.5px;top:364px" width="11" height="7" viewBox="0 0 11 7"><path d="M.300 .300h10.400L5.500 6.500z" fill="#111"/></svg>
<span style="left:994.80px;top:360.00px;line-height:12.5px;font-size:12.5px;font-weight:400;color:#222;letter-spacing:-0.016px;">On/Off</span>
<div class="inp" style="left:1035px;top:355px;width:236px;height:24px;"></div>
<span style="left:1046.00px;top:361.00px;line-height:12.5px;font-size:12.5px;font-weight:400;color:#111;letter-spacing:-0.135px;">All</span>
<svg style="left:1249.5px;top:364px" width="11" height="7" viewBox="0 0 11 7"><path d="M.300 .300h10.400L5.500 6.500z" fill="#111"/></svg>
<span style="left:1358.70px;top:360.00px;line-height:12.5px;font-size:12.5px;font-weight:400;color:#222;letter-spacing:-0.380px;">Domain</span>
<div class="inp" style="left:1403px;top:355px;width:236px;height:24px;"></div>
<span style="left:1414.00px;top:360.00px;line-height:12.5px;font-size:12.5px;font-weight:400;color:#111;letter-spacing:-0.264px;">hana.ohmyhotel.com</span>
<svg style="left:1610.7px;top:364px" width="11" height="7" viewBox="0 0 11 7"><path d="M.300 .300h10.400L5.500 6.500z" fill="#111"/></svg>
<span style="left:247.70px;top:394.00px;line-height:12.5px;font-size:12.5px;font-weight:400;color:#222;letter-spacing:-0.039px;">Mutual</span>
<div class="inp" style="left:288px;top:389px;width:246px;height:24px;"></div>
<span style="left:299.00px;top:395.00px;line-height:12.5px;font-size:12.5px;font-weight:400;color:#111;letter-spacing:-0.135px;">All</span>
<svg style="left:512.5px;top:398px" width="11" height="7" viewBox="0 0 11 7"><path d="M.300 .300h10.400L5.500 6.500z" fill="#111"/></svg>
<span style="left:618.50px;top:394.00px;line-height:12.5px;font-size:12.5px;font-weight:400;color:#222;letter-spacing:-0.888px;">BKG PIC</span>
<div class="inp" style="left:666px;top:389px;width:237px;height:24px;"></div>
<svg style="left:682.3px;top:394.1px" width="14" height="14" viewBox="0 0 14 14" fill="none" stroke="#848484" stroke-width="1.100"><circle cx="6.300" cy="6.300" r="5"/><path d="M9.800 9.900l2.300 1.900" stroke-width="1.300"/></svg>
<span style="left:708.00px;top:395.00px;line-height:12.5px;font-size:12.5px;font-weight:400;font-style:italic;color:#c9c9c9;letter-spacing:-0.461px;">Name</span>
<div class="inp" style="left:913px;top:389px;width:117px;height:24px;"></div>
<span style="left:924.00px;top:395.00px;line-height:12.5px;font-size:12.5px;font-weight:400;color:#111;letter-spacing:-0.449px;">Booker Name</span>
<svg style="left:1008.9px;top:398px" width="11" height="7" viewBox="0 0 11 7"><path d="M.300 .300h10.400L5.500 6.500z" fill="#111"/></svg>
<div class="inp" style="left:1035px;top:389px;width:236px;height:24px;"></div>
<div style="left:1403px;top:393px;width:18px;height:18px;background:#fff;border:1px solid #dadada;border-radius:2px;"></div>
<span style="left:1431.00px;top:395.00px;line-height:14px;font-size:14px;font-weight:400;color:#222;letter-spacing:-0.512px;">Direct Only</span>
<span style="left:182.00px;top:428.00px;line-height:12.5px;font-size:12.5px;font-weight:400;color:#222;letter-spacing:-0.251px;">Parent Comp Code</span>
<div class="inp" style="left:288px;top:423px;width:246px;height:24px;"></div>
<svg style="left:304.3px;top:428.1px" width="14" height="14" viewBox="0 0 14 14" fill="none" stroke="#848484" stroke-width="1.100"><circle cx="6.300" cy="6.300" r="5"/><path d="M9.800 9.900l2.300 1.900" stroke-width="1.300"/></svg>
<span style="left:596.40px;top:428.00px;line-height:12.5px;font-size:12.5px;font-weight:400;color:#222;letter-spacing:-0.264px;">Chain Brand</span>
<div class="inp" style="left:666px;top:423px;width:237px;height:24px;"></div>
<svg style="left:682.3px;top:428.1px" width="14" height="14" viewBox="0 0 14 14" fill="none" stroke="#848484" stroke-width="1.100"><circle cx="6.300" cy="6.300" r="5"/><path d="M9.800 9.900l2.300 1.900" stroke-width="1.300"/></svg>
<span style="left:150.70px;top:497.00px;line-height:13.5px;font-size:13.5px;font-weight:700;color:#111;letter-spacing:-0.016px;">2</span>
<div class="btn" style="left:1517px;top:492px;width:97px;height:24px;"></div>
<span style="left:1532.80px;top:498.00px;line-height:12.5px;font-size:12.5px;font-weight:400;color:#111;letter-spacing:-0.217px;">Booking List</span>
<div class="btn" style="left:1619px;top:492px;width:114px;height:24px;"></div>
<span style="left:1635.50px;top:498.00px;line-height:12.5px;font-size:12.5px;font-weight:400;color:#111;letter-spacing:-0.305px;">Data Download</span>
<div class="inp" style="left:1738px;top:492px;width:67px;height:24px;"></div>
<span style="left:1749.50px;top:498.00px;line-height:12.5px;font-size:12.5px;font-weight:400;color:#111;letter-spacing:0.047px;">20</span>
<svg style="left:1783.7px;top:501px" width="11" height="7" viewBox="0 0 11 7"><path d="M.300 .300h10.400L5.500 6.500z" fill="#111"/></svg>
<div style="left:150px;top:527px;width:1655px;height:1.4px;background:#8c8c8c;"></div>
<div style="left:150px;top:528.4px;width:1655px;height:31px;background:#f2f2f2;"></div>
<div style="left:150px;top:559px;width:1655px;height:1px;background:#e0e0e0;"></div>
<div style="left:150px;top:612.5px;width:1655px;height:53.5px;background:#fafafa;"></div>
<div style="left:290px;top:528.4px;width:1px;height:137.6px;background:#e3e3e3;"></div>
<div style="left:514px;top:528.4px;width:1px;height:137.6px;background:#e3e3e3;"></div>
<div style="left:815px;top:528.4px;width:1px;height:137.6px;background:#e3e3e3;"></div>
<div style="left:1081px;top:528.4px;width:1px;height:137.6px;background:#e3e3e3;"></div>
<div style="left:1235px;top:528.4px;width:1px;height:137.6px;background:#e3e3e3;"></div>
<div style="left:1424px;top:528.4px;width:1px;height:137.6px;background:#e3e3e3;"></div>
<div style="left:1557px;top:528.4px;width:1px;height:137.6px;background:#e3e3e3;"></div>
<div style="left:1697px;top:528.4px;width:1px;height:137.6px;background:#e3e3e3;"></div>
<span style="left:180.60px;top:536.00px;line-height:13.5px;font-size:13.5px;font-weight:400;color:#111;letter-spacing:-0.172px;-webkit-text-stroke:.420px #111;">Booking Date</span>
<span style="left:385.55px;top:536.00px;line-height:13.5px;font-size:13.5px;font-weight:400;color:#111;letter-spacing:-0.169px;-webkit-text-stroke:.420px #111;">Seller</span>
<span style="left:649.60px;top:536.00px;line-height:13.5px;font-size:13.5px;font-weight:400;color:#111;letter-spacing:-0.063px;-webkit-text-stroke:.420px #111;">Hotel</span>
<span style="left:884.20px;top:536.00px;line-height:13.5px;font-size:13.5px;font-weight:400;color:#111;letter-spacing:-0.226px;-webkit-text-stroke:.420px #111;">Check In / Room Type</span>
<span style="left:1105.30px;top:536.00px;line-height:13.5px;font-size:13.5px;font-weight:400;color:#111;letter-spacing:-0.194px;-webkit-text-stroke:.420px #111;">1st Traveler Name</span>
<span style="left:1285.50px;top:536.00px;line-height:13.5px;font-size:13.5px;font-weight:400;color:#111;letter-spacing:-0.129px;-webkit-text-stroke:.420px #111;">Booking Status</span>
<span style="left:1444.50px;top:536.00px;line-height:13.5px;font-size:13.5px;font-weight:400;color:#111;letter-spacing:-0.165px;-webkit-text-stroke:.420px #111;">Payment Status</span>
<span style="left:1607.00px;top:536.00px;line-height:13.5px;font-size:13.5px;font-weight:400;color:#111;letter-spacing:-0.166px;-webkit-text-stroke:.420px #111;">Vendor</span>
<div style="left:1698px;top:529px;width:107px;height:30px;overflow:hidden;"><span style="left:20.300px;top:6.770px;line-height:13.500px;font-size:13.500px;font-weight:400;-webkit-text-stroke:.420px #111;color:#111;letter-spacing:-.300px;">Old Booking Code</span></div>
<span style="left:160.30px;top:569.00px;line-height:12.5px;font-size:12.5px;font-weight:400;color:#8a8a8a;letter-spacing:0.194px;">2025-06-26 10:36</span>
<span style="left:160.30px;top:590.00px;line-height:12.5px;font-size:12.5px;font-weight:500;color:#111;letter-spacing:0.403px;text-decoration:underline;text-underline-offset:1px;-webkit-text-stroke:.250px #111;">K25062610002H01</span>
<div style="left:301.3px;top:574.0px;width:32.8px;height:20px;background:#f2f2f2;border-radius:3px;"></div>
<span style="left:306.20px;top:578.00px;line-height:12.5px;font-size:12.5px;font-weight:400;color:#555;letter-spacing:-0.443px;">B2C</span>
<span style="left:339.50px;top:578.00px;line-height:12.5px;font-size:12.5px;font-weight:400;color:#111;letter-spacing:-0.218px;">Hana card travel bucket</span>
<div style="left:525.2px;top:574.0px;width:53.7px;height:20px;background:#f2f2f2;border-radius:3px;"></div>
<span style="left:530.05px;top:578.00px;line-height:12.5px;font-size:12.5px;font-weight:400;color:#555;letter-spacing:0.380px;">845586</span>
<span style="left:584.80px;top:578.00px;line-height:12.5px;font-size:12.5px;font-weight:400;color:#111;letter-spacing:-0.297px;">Hotel Gracery Shinjuku</span>
<span style="left:826.50px;top:569.00px;line-height:12.5px;font-size:12.5px;font-weight:400;color:#8a8a8a;letter-spacing:0.110px;">2025-07-03 / 1N</span>
<span style="left:826.50px;top:590.00px;line-height:12.5px;font-size:12.5px;font-weight:400;color:#111;letter-spacing:-0.401px;">Double room X 1</span>
<span style="left:1091.70px;top:581.00px;line-height:11px;font-size:11px;font-weight:400;color:#222;letter-spacing:0.375px;">켈리</span>
<span style="left:1246.30px;top:569.00px;line-height:12.5px;font-size:12.5px;font-weight:500;color:#fb0a1a;letter-spacing:-0.222px;-webkit-text-stroke:.200px #fb0a1a;">Cancelled</span>
<span style="left:1246.30px;top:590.00px;line-height:12.5px;font-size:12.5px;font-weight:400;color:#8a8a8a;letter-spacing:0.090px;">TL 2025-06-25 17:00</span>
<div style="left:1435px;top:567.0px;width:16px;height:16px;background:#fff;border:1px solid #777;border-radius:2px;"></div>
<span style="left:1439.48px;top:571.00px;line-height:10px;font-size:10px;font-weight:400;color:#666;">C</span>
<span style="left:1456.30px;top:569.00px;line-height:12.5px;font-size:12.5px;font-weight:400;color:#222;letter-spacing:-0.539px;">Fully Paid</span>
<div style="left:1435px;top:589.0px;width:16px;height:16px;background:#fff;border:1px solid #777;border-radius:2px;"></div>
<span style="left:1439.76px;top:593.00px;line-height:10px;font-size:10px;font-weight:400;color:#666;">V</span>
<span style="left:1456.30px;top:590.00px;line-height:12.5px;font-size:12.5px;font-weight:400;color:#222;letter-spacing:-0.432px;">Not Paid</span>
<div style="left:1568.3px;top:566.0px;width:53.7px;height:20px;background:#f2f2f2;border-radius:3px;"></div>
<span style="left:1573.15px;top:570.00px;line-height:12.5px;font-size:12.5px;font-weight:400;color:#555;letter-spacing:0.380px;">910005</span>
<span style="left:1627.50px;top:569.00px;line-height:12.5px;font-size:12.5px;font-weight:400;color:#111;letter-spacing:-0.605px;">FITRuums</span>
<span style="left:1568.30px;top:592.00px;line-height:12.5px;font-size:12.5px;font-weight:400;color:#8a8a8a;letter-spacing:0.002px;">SH25516555</span>
<span style="left:160.30px;top:622.00px;line-height:12.5px;font-size:12.5px;font-weight:400;color:#8a8a8a;letter-spacing:0.194px;">2025-06-26 10:04</span>
<span style="left:160.30px;top:643.00px;line-height:12.5px;font-size:12.5px;font-weight:500;color:#111;letter-spacing:0.403px;text-decoration:underline;text-underline-offset:1px;-webkit-text-stroke:.250px #111;">K25062610001H01</span>
<div style="left:301.3px;top:627.0px;width:32.8px;height:20px;background:#f2f2f2;border-radius:3px;"></div>
<span style="left:306.20px;top:631.00px;line-height:12.5px;font-size:12.5px;font-weight:400;color:#555;letter-spacing:-0.443px;">B2C</span>
<span style="left:339.50px;top:631.00px;line-height:12.5px;font-size:12.5px;font-weight:400;color:#111;letter-spacing:-0.218px;">Hana card travel bucket</span>
<div style="left:525.2px;top:627.0px;width:53.7px;height:20px;background:#f2f2f2;border-radius:3px;"></div>
<span style="left:530.05px;top:631.00px;line-height:12.5px;font-size:12.5px;font-weight:400;color:#555;letter-spacing:0.380px;">799520</span>
<span style="left:584.80px;top:631.00px;line-height:12.5px;font-size:12.5px;font-weight:400;color:#111;letter-spacing:-0.268px;">Hotel MyStays Higashi Ikebukuro</span>
<span style="left:826.50px;top:622.00px;line-height:12.5px;font-size:12.5px;font-weight:400;color:#8a8a8a;letter-spacing:0.110px;">2025-08-28 / 1N</span>
<span style="left:826.50px;top:643.00px;line-height:12.5px;font-size:12.5px;font-weight:400;color:#111;letter-spacing:-0.286px;">Double room - Superior - Semi X 1</span>
<span style="left:1091.70px;top:634.00px;line-height:11px;font-size:11px;font-weight:400;color:#222;letter-spacing:0.208px;">강현아</span>
<span style="left:1246.30px;top:622.00px;line-height:12.5px;font-size:12.5px;font-weight:500;color:#fb0a1a;letter-spacing:-0.222px;-webkit-text-stroke:.200px #fb0a1a;">Cancelled</span>
<span style="left:1246.30px;top:643.00px;line-height:12.5px;font-size:12.5px;font-weight:400;color:#8a8a8a;letter-spacing:0.090px;">TL 2025-06-25 17:00</span>
<div style="left:1435px;top:620.0px;width:16px;height:16px;background:#fff;border:1px solid #777;border-radius:2px;"></div>
<span style="left:1439.48px;top:624.00px;line-height:10px;font-size:10px;font-weight:400;color:#666;">C</span>
<span style="left:1456.30px;top:622.00px;line-height:12.5px;font-size:12.5px;font-weight:400;color:#222;letter-spacing:-0.539px;">Fully Paid</span>
<div style="left:1435px;top:642.0px;width:16px;height:16px;background:#fff;border:1px solid #777;border-radius:2px;"></div>
<span style="left:1439.76px;top:646.00px;line-height:10px;font-size:10px;font-weight:400;color:#666;">V</span>
<span style="left:1456.30px;top:643.00px;line-height:12.5px;font-size:12.5px;font-weight:400;color:#222;letter-spacing:-0.432px;">Not Paid</span>
<div style="left:1568.3px;top:619.0px;width:53.7px;height:20px;background:#f2f2f2;border-radius:3px;"></div>
<span style="left:1573.15px;top:623.00px;line-height:12.5px;font-size:12.5px;font-weight:400;color:#555;letter-spacing:0.380px;">910005</span>
<span style="left:1627.50px;top:622.00px;line-height:12.5px;font-size:12.5px;font-weight:400;color:#111;letter-spacing:-0.605px;">FITRuums</span>
<span style="left:1568.30px;top:645.00px;line-height:12.5px;font-size:12.5px;font-weight:400;color:#8a8a8a;letter-spacing:-0.048px;">SH25516391</span>
<svg style="left:154px;top:669.500px" width="8" height="9" viewBox="0 0 8 9"><path d="M7.600 .300v8.400L.400 4.500z" fill="#7e7e7e"/></svg>
<div style="left:168px;top:669.4px;width:1582px;height:8.4px;background:#8c8c8c;border-radius:4px;"></div>
<svg style="left:1793px;top:669.500px" width="9" height="9" viewBox="0 0 9 9"><path d="M.400 .300v8.400L8.400 4.500z" fill="#7e7e7e"/></svg>
<div style="left:150px;top:681px;width:1655px;height:1.2px;background:#8c8c8c;"></div>
<div style="left:150px;top:682.2px;width:1655px;height:43.8px;background:#f2f2f2;"></div>
<div style="left:150px;top:725.5px;width:1655px;height:1.2px;background:#8c8c8c;"></div>
<div style="left:215px;top:690px;width:29px;height:28px;background:#f6d6d6;"></div>
<span style="left:225.74px;top:698.00px;line-height:13.5px;font-size:13.5px;font-weight:400;color:#ff5c5c;">1</span>
<svg style="left:167.200px;top:699.100px" width="9" height="9" viewBox="0 0 9 9"><path d="M.400 .300h1.500v8.400H.400z M8.500 .300v8.400L2.200 4.500z" fill="#606060"/></svg>
<svg style="left:197px;top:699.100px" width="8" height="9" viewBox="0 0 8 9"><path d="M6.900 .300v8.400L.600 4.500z" fill="#606060"/></svg>
<svg style="left:254.100px;top:699.100px" width="8" height="9" viewBox="0 0 8 9"><path d="M.500 .300v8.400L6.800 4.500z" fill="#606060"/></svg>
<svg style="left:281.400px;top:699.100px" width="9" height="9" viewBox="0 0 9 9"><path d="M.400 .300v8.400L6.700 4.500z M7 .300h1.500v8.400H7z" fill="#606060"/></svg>
<span style="left:1696.30px;top:698.00px;line-height:12.5px;font-size:12.5px;font-weight:400;color:#222;letter-spacing:0.332px;">1 - 2 of 2 items</span>
<div class="btn" style="left:1628px;top:738px;width:84px;height:24px;"></div>
<span style="left:1644.20px;top:744.00px;line-height:12.5px;font-size:12.5px;font-weight:400;color:#111;letter-spacing:-0.399px;">Grid Save</span>
<div class="btn" style="left:1717px;top:738px;width:88px;height:24px;"></div>
<span style="left:1733.00px;top:744.00px;line-height:12.5px;font-size:12.5px;font-weight:400;color:#111;letter-spacing:-0.325px;">Grid Reset</span>
<svg style="left:0;top:0" width="1829" height="869" viewBox="0 0 1829 869"><g fill="none" stroke="#e3191f" stroke-width="4"><rect x="1355.500" y="348.700" width="289.900" height="35.600"/><rect x="124.500" y="541.700" width="388" height="127"/><path d="M1387.500 388L542 556.600"/></g><path d="M523.700 560.200L541.100 547.300L544.900 566.100z" fill="#e3191f"/></svg>
<div style="left:125px;top:75px;width:9px;height:794px;background:linear-gradient(90deg,rgba(90,70,110,.090),rgba(90,70,110,.030) 40%,rgba(90,70,110,0));"></div>
</div>
</body></html>
